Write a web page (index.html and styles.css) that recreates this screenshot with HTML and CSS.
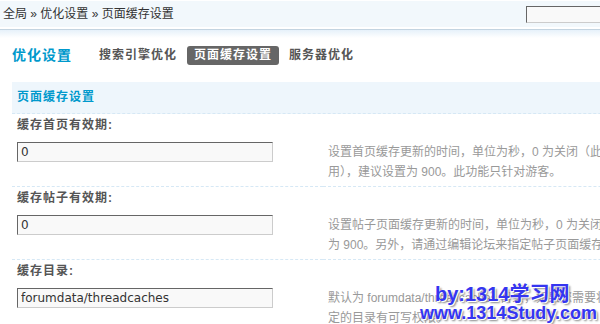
FILE: index.html
```html
<!DOCTYPE html>
<html lang="zh-CN">
<head>
    <meta charset="UTF-8">
    <title>页面缓存设置</title>
    <link rel="stylesheet" href="styles.css">
</head>
<body>
    <div class="page">
        <div class="topbar">
            <div class="crumb">全局 &raquo; 优化设置 &raquo; 页面缓存设置</div>
            <input class="search" type="text">
        </div>
        <div class="topline"></div>

        <div class="nav">
            <h2>优化设置</h2>
            <ul class="tabs">
                <li>搜索引擎优化</li>
                <li class="current">页面缓存设置</li>
                <li>服务器优化</li>
            </ul>
        </div>

        <table class="tb">
            <colgroup>
                <col class="col-input">
                <col>
            </colgroup>
            <tr>
                <th colspan="2" class="partition">页面缓存设置</th>
            </tr>
            <tr>
                <td colspan="2" class="label">缓存首页有效期:</td>
            </tr>
            <tr>
                <td class="vtop"><input class="txt" type="text" name="indexlife" value="0"></td>
                <td class="tips">设置首页缓存更新的时间，单位为秒，0 为关闭（此功能对首页游客起作<br>用），建议设置为 900。此功能只针对游客。</td>
            </tr>
            <tr>
                <td colspan="2" class="label">缓存帖子有效期:</td>
            </tr>
            <tr>
                <td class="vtop"><input class="txt" type="text" name="threadlife" value="0"></td>
                <td class="tips">设置帖子页面缓存更新的时间，单位为秒，0 为关闭（此处关闭将不缓存帖子页面），建议设置<br>为 900。另外，请通过编辑论坛来指定帖子页面缓存的作用范围。</td>
            </tr>
            <tr>
                <td colspan="2" class="label">缓存目录:</td>
            </tr>
            <tr>
                <td class="vtop"><input class="txt" type="text" name="cachedir" value="forumdata/threadcaches"></td>
                <td class="tips">默认为 forumdata/threadcaches 目录，如果您需要将其指定为其他目录，请确定您指<br>定的目录有可写权限。</td>
            </tr>
        </table>

        <div class="watermark">
            <span class="wm1">by:1314学习网</span>
            <span class="wm2">www.1314Study.com</span>
        </div>
    </div>
</body>
</html>
```

FILE: styles.css
```css
html, body {
    margin: 0;
    overflow: hidden;
}
body {
    font: 12px/1.5 "Liberation Sans", "Noto Sans CJK SC", sans-serif;
    color: #333;
    background: #fff;
}
.page {
    position: relative;
    width: 720px;
}
.topbar {
    display: flex;
    align-items: center;
    height: 26px;
    margin-top: 1px;
    background: #f2f8fc;
    border-bottom: 2px solid #fff;
}
.crumb {
    padding-left: 3px;
    line-height: 26px;
}
.search {
    margin-left: auto;
    margin-right: 14px;
    width: 180px;
    height: 17px;
    box-sizing: border-box;
    border: 1px solid;
    border-color: #666 #ccc #ccc #666;
    background: #f9f9f9;
}
.topline {
    height: 8px;
    border-top: 1px solid #c3d4e1;
    background: linear-gradient(#e6f1fa, #fff);
}
.nav {
    display: flex;
    align-items: center;
    padding: 8px 0 17px 12px;
}
.nav h2 {
    margin: 0 20px 0 0;
    font-size: 14px;
    line-height: 19px;
    letter-spacing: 1px;
    color: #09c;
}
.tabs {
    display: flex;
    gap: 3px;
    margin: 0;
    padding: 0;
    list-style: none;
}
.tabs li {
    padding: 0 7px;
    line-height: 19px;
    font-weight: bold;
    letter-spacing: 1px;
    color: #555;
    border-radius: 3px;
}
.tabs li.current {
    background: #666;
    color: #fff;
}
.tb {
    table-layout: fixed;
    width: 900px;
    margin-left: 12px;
    border-spacing: 0;
}
.tb .col-input {
    width: 311px;
}
.tb td, .tb th {
    padding: 0 5px;
    text-align: left;
}
.tb .partition {
    height: 31px;
    line-height: 31px;
    background: #eef6fc;
    color: #09c;
    letter-spacing: 1px;
    border-bottom: 1px dashed #d6e8f5;
}
.tb .label {
    padding-top: 3px;
    padding-bottom: 4px;
    line-height: 16px;
    font-weight: bold;
    letter-spacing: 1px;
    color: #555;
}
.tb .vtop {
    padding-top: 5px;
    padding-bottom: 4px;
    vertical-align: top;
    border-bottom: 1px dashed #d6e8f5;
}
.tb .tips {
    padding-top: 5px;
    padding-bottom: 4px;
    line-height: 20px;
    color: #999;
    white-space: nowrap;
    overflow: hidden;
    vertical-align: top;
    border-bottom: 1px dashed #d6e8f5;
}
.txt {
    display: block;
    width: 256px;
    height: 20px;
    box-sizing: border-box;
    padding: 0 3px;
    border: 1px solid;
    border-color: #666 #ccc #ccc #666;
    background: #f9f9f9;
    font: 12px "DejaVu Sans", sans-serif;
    color: #333;
}
.watermark {
    position: absolute;
    left: 420px;
    top: 284px;
    font: bold 18px/19px "Liberation Sans", "Noto Sans CJK SC", sans-serif;
    color: #3535f0;
    text-shadow: 1px 1px 0 #fff, 2px 2px 2px #888;
}
.watermark span {
    display: block;
}
.wm1 {
    padding-left: 15px;
    font-size: 20px;
}
```
